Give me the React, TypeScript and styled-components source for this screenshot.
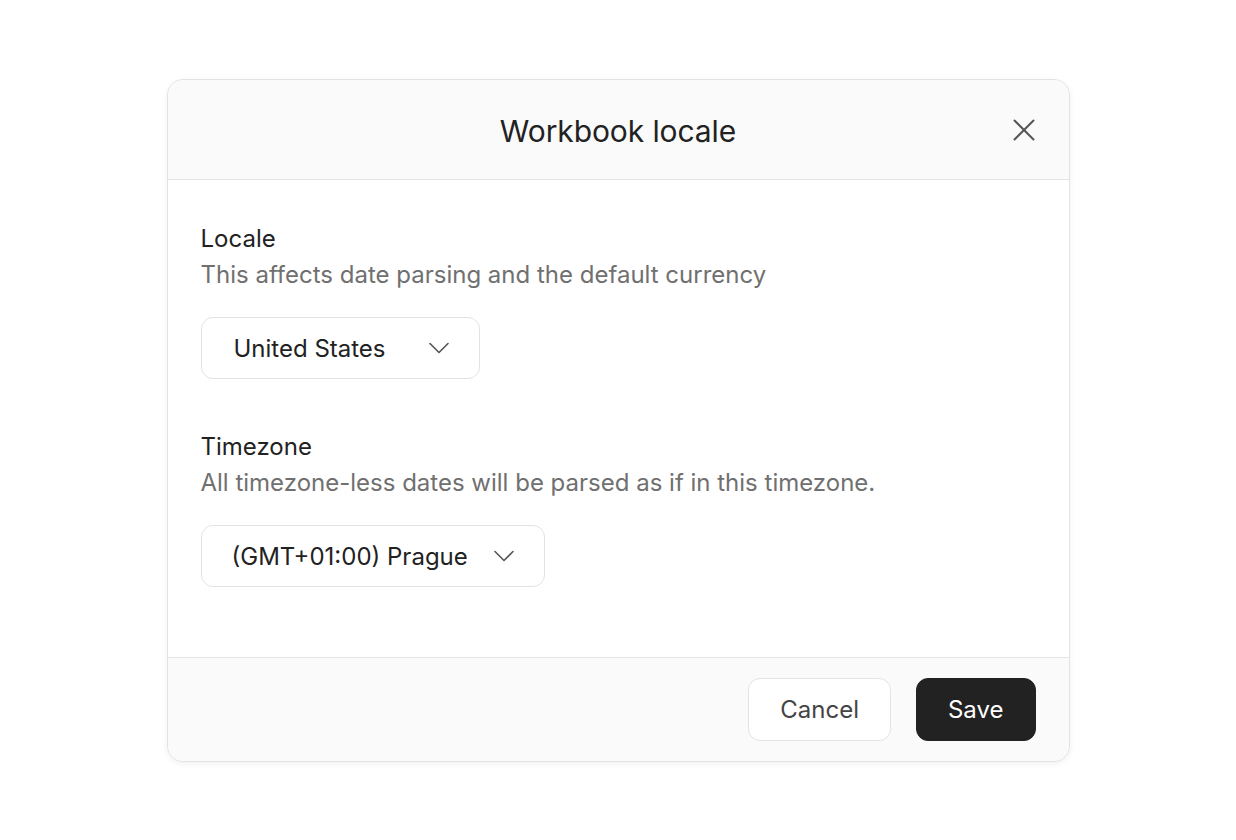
import React from "react";
import styled, { createGlobalStyle } from "styled-components";

const Global = createGlobalStyle`
  html, body { margin: 0; padding: 0; background: #ffffff; }
  body { font-family: Inter, "Noto Sans", sans-serif; color: #222222; }
  * { box-sizing: border-box; }
`;

const Page = styled.div`
  width: 1236px;
  height: 840px;
  display: flex;
  justify-content: center;
  padding-top: 79px;
`;

const Dialog = styled.div`
  width: 903px;
  height: 683px;
  border: 1px solid #e2e2e2;
  border-radius: 16px;
  background: #ffffff;
  box-shadow: 0 2px 6px rgba(0, 0, 0, 0.06);
  display: flex;
  flex-direction: column;
  overflow: hidden;
`;

const Header = styled.div`
  height: 100px;
  flex: none;
  position: relative;
  background: #fafafa;
  border-bottom: 1px solid #e5e5e5;
  display: flex;
  align-items: center;
  justify-content: center;
`;

const Title = styled.h1`
  margin: 0 0 -2px;
  font-size: 30px;
  font-weight: 400;
  letter-spacing: -0.1px;
  color: #222222;
`;

const CloseButton = styled.button`
  position: absolute;
  right: 33px;
  top: 38px;
  width: 24px;
  height: 24px;
  padding: 0;
  border: none;
  background: transparent;
  color: #555555;
  display: flex;
  align-items: center;
  justify-content: center;
  cursor: pointer;
`;

const Body = styled.div`
  flex: 1;
  padding: 41px 33px 0;
  display: flex;
  flex-direction: column;
  gap: 50px;
`;

const Section = styled.div`
  display: flex;
  flex-direction: column;
  align-items: flex-start;
`;

const Label = styled.div`
  font-size: 24px;
  line-height: 36px;
  color: #222222;
`;

const Description = styled.div`
  font-size: 24px;
  line-height: 36px;
  color: #707070;
`;

const Select = styled.button<{ $padLeft: number; $gap: number }>`
  margin-top: 24px;
  height: 62px;
  padding: 0 30px 0 ${(p) => p.$padLeft}px;
  border: 1px solid #e3e3e3;
  border-radius: 12px;
  background: #ffffff;
  font-family: inherit;
  font-size: 24px;
  color: #222222;
  display: flex;
  align-items: center;
  gap: ${(p) => p.$gap}px;
  cursor: pointer;
`;

const Footer = styled.div`
  height: 104px;
  flex: none;
  background: #fafafa;
  border-top: 1px solid #e5e5e5;
  display: flex;
  align-items: center;
  justify-content: flex-end;
  gap: 25px;
  padding: 0 33px 0 0;
`;

const Button = styled.button<{ $primary?: boolean }>`
  height: 63px;
  padding: 0 ${(p) => (p.$primary ? 31 : 31)}px;
  border-radius: 12px;
  border: 1px solid ${(p) => (p.$primary ? "#222222" : "#e3e3e3")};
  background: ${(p) => (p.$primary ? "#222222" : "#ffffff")};
  color: ${(p) => (p.$primary ? "#ffffff" : "#444444")};
  font-family: inherit;
  font-size: 24px;
  cursor: pointer;
`;

const Chevron = () => (
  <svg width="20" height="12" viewBox="0 0 20 12" fill="none" aria-hidden="true">
    <path d="M1 1.5 L10 10.5 L19 1.5" stroke="#555" strokeWidth="1.6" strokeLinecap="round" strokeLinejoin="round" />
  </svg>
);

const CloseIcon = () => (
  <svg width="22" height="22" viewBox="0 0 22 22" fill="none" aria-hidden="true">
    <path d="M1.5 1.5 L20.5 20.5 M20.5 1.5 L1.5 20.5" stroke="#555" strokeWidth="2" strokeLinecap="round" />
  </svg>
);

export default function App() {
  return (
    <>
      <Global />
      <Page>
        <Dialog>
          <Header>
            <Title>Workbook locale</Title>
            <CloseButton aria-label="Close">
              <CloseIcon />
            </CloseButton>
          </Header>
          <Body>
            <Section>
              <Label>Locale</Label>
              <Description>This affects date parsing and the default currency</Description>
              <Select $padLeft={32} $gap={43}>
                United States
                <Chevron />
              </Select>
            </Section>
            <Section>
              <Label>Timezone</Label>
              <Description>All timezone-less dates will be parsed as if in this timezone.</Description>
              <Select $padLeft={30} $gap={26}>
                (GMT+01:00) Prague
                <Chevron />
              </Select>
            </Section>
          </Body>
          <Footer>
            <Button>Cancel</Button>
            <Button $primary>Save</Button>
          </Footer>
        </Dialog>
      </Page>
    </>
  );
}
